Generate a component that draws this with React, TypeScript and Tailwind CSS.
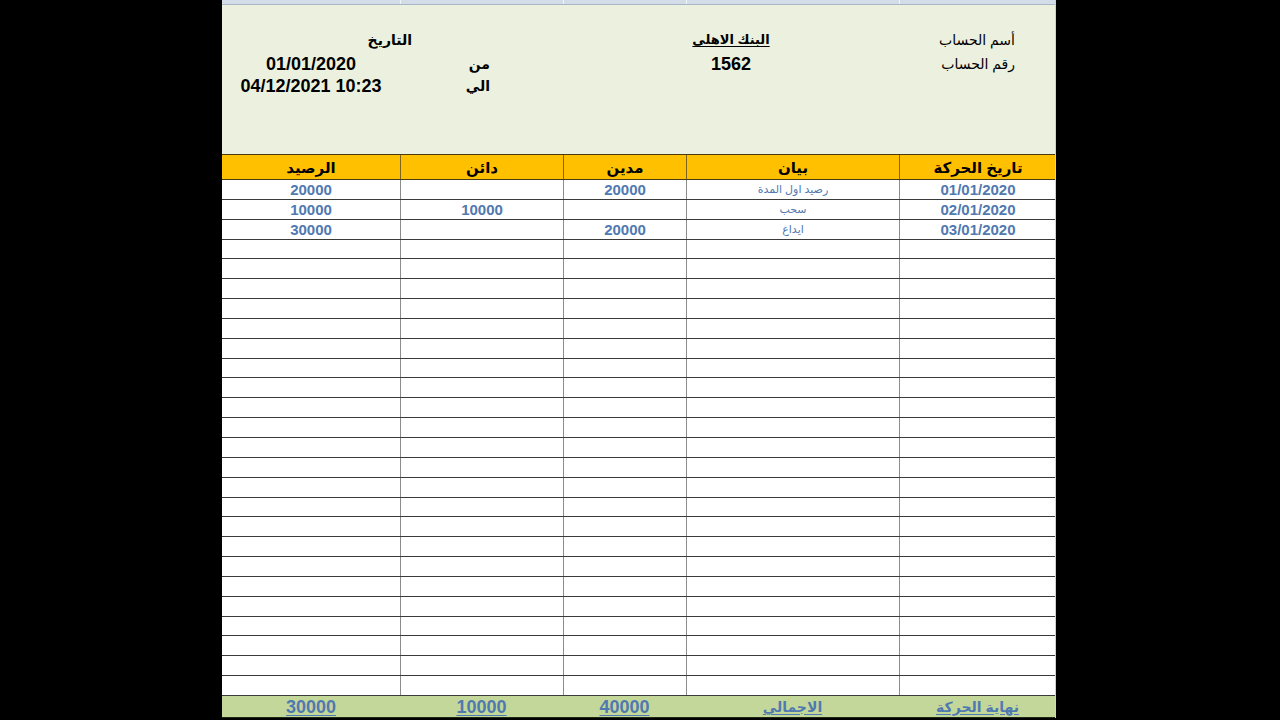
const COLS = 'grid grid-cols-[178px_163px_123px_213px_157px]'

const ROWS = [
  { balance: '20000', credit: '', debit: '20000', desc: 'رصيد اول المدة', date: '01/01/2020' },
  { balance: '10000', credit: '10000', debit: '', desc: 'سحب', date: '02/01/2020' },
  { balance: '30000', credit: '', debit: '20000', desc: 'ايداع', date: '03/01/2020' },
]

const EMPTY_ROWS = 23

function DataRow({ row }: { row?: (typeof ROWS)[number] }) {
  return (
    <div className={`${COLS} flex-1 border-b border-[#3a3a3a] text-[15px] font-bold leading-none text-[#5079b0]`}>
      <div className="flex items-center justify-center">{row?.balance}</div>
      <div className="flex items-center justify-center border-l border-[#8c8c8c]">{row?.credit}</div>
      <div className="flex items-center justify-center border-l border-[#8c8c8c]">{row?.debit}</div>
      <div dir="rtl" className="flex items-center justify-center border-l border-[#8c8c8c] text-[11px] font-normal">
        {row?.desc}
      </div>
      <div className="flex items-center justify-center border-l border-[#8c8c8c]">{row?.date}</div>
    </div>
  )
}

export default function App() {
  return (
    <div
      className="flex h-[720px] w-[1280px] overflow-hidden bg-black text-black"
      style={{ fontFamily: '"Liberation Sans", "DejaVu Sans", sans-serif' }}
    >
      <div className="w-[222px] shrink-0" />
      <div className="flex h-[718px] w-[834px] shrink-0 flex-col border-r border-[#c9d2dc]">
        {/* strip of the row above */}
        <div className={`${COLS} h-[5px] border-b border-[#a9b6c4] bg-[#d3dde9]`}>
          <div />
          <div className="border-l border-[#f2f5f8]" />
          <div className="border-l border-[#f2f5f8]" />
          <div className="border-l border-[#f2f5f8]" />
          <div className="border-l border-[#f2f5f8]" />
        </div>

        {/* account info */}
        <div className="h-[149px] bg-[#ebf1de] pt-[24px]">
          <div className={`${COLS} h-[22px] items-center`}>
            <div dir="rtl" className="col-span-2 pr-[151px] text-[14px] font-bold">التاريخ</div>
            <div dir="rtl" className="col-span-2 text-center text-[13px] font-bold">
              <span className="underline underline-offset-2">البنك الاهلى</span>
            </div>
            <div dir="rtl" className="pr-[41px] text-[14px]">أسم الحساب</div>
          </div>
          <div className={`${COLS} h-[22px] items-center`}>
            <div className="text-center text-[18px] font-bold">01/01/2020</div>
            <div dir="rtl" className="pr-[73px] text-[14px] font-bold">من</div>
            <div className="col-span-2 text-center text-[18px] font-bold">1562</div>
            <div dir="rtl" className="pr-[41px] text-[14px]">رقم الحساب</div>
          </div>
          <div className={`${COLS} h-[24px] items-center`}>
            <div className="text-center text-[18px] font-bold">04/12/2021 10:23</div>
            <div dir="rtl" className="pr-[73px] text-[14px] font-bold">الي</div>
          </div>
        </div>

        {/* column titles */}
        <div className={`${COLS} h-[26px] border-y border-[#4a3b10] bg-[#ffc000] text-[15px] font-bold leading-none`}>
          <div className="flex items-center justify-center">الرصيد</div>
          <div className="flex items-center justify-center border-l border-[#7a6420]">دائن</div>
          <div className="flex items-center justify-center border-l border-[#7a6420]">مدين</div>
          <div className="flex items-center justify-center border-l border-[#7a6420]">بيان</div>
          <div className="flex items-center justify-center border-l border-[#7a6420]">تاريخ الحركة</div>
        </div>

        {/* movements */}
        <div className="flex h-[516px] flex-col bg-white">
          {ROWS.map((r) => (
            <DataRow key={r.date} row={r} />
          ))}
          {Array.from({ length: EMPTY_ROWS }).map((_, i) => (
            <DataRow key={i} />
          ))}
        </div>

        {/* totals */}
        <div
          className={`${COLS} h-[22px] border-b border-[#1f2a14] bg-[#c4d79b] text-[18px] font-bold leading-none text-[#5079b0]`}
        >
          <div className="flex items-center justify-center underline underline-offset-2">30000</div>
          <div className="flex items-center justify-center underline underline-offset-2">10000</div>
          <div className="flex items-center justify-center underline underline-offset-2">40000</div>
          <div className="flex items-center justify-center text-[14px] underline underline-offset-2">الاجمالي</div>
          <div className="flex items-center justify-center text-[14px] underline underline-offset-2">نهاية الحركة</div>
        </div>
      </div>
    </div>
  )
}
